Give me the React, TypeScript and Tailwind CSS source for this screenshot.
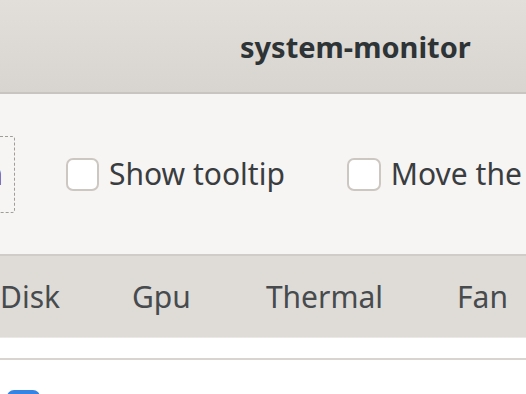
import React from "react";

export default function App() {
  return (
    <div
      className="w-[526px] h-[394px] overflow-hidden flex flex-col bg-white"
      style={{ fontFamily: '"Noto Sans", "DejaVu Sans", sans-serif' }}
    >
      {/* header bar */}
      <div className="h-[94px] shrink-0 flex items-center pl-[240px] bg-gradient-to-b from-[#e2dfdb] to-[#d8d4d0] border-b-2 border-[#c8c4bf]">
        <span className="text-[29px] font-bold text-[#2e3436] leading-none whitespace-nowrap">
          system-monitor
        </span>
      </div>

      {/* options row */}
      <div className="h-[160px] shrink-0 bg-[#f6f5f4] flex items-center whitespace-nowrap">
        <div className="w-[15px] h-[77px] shrink-0 border-y border-r border-dashed border-[#a09c98] rounded-r-[3px] overflow-hidden flex items-center justify-end pr-[11px]">
          <span className="text-[30px] leading-none text-[#7a1f3d]">n</span>
        </div>
        <div className="ml-[51px] flex items-center gap-[10px]">
          <div className="w-[33px] h-[33px] rounded-[7px] border-2 border-[#cdc7c1] bg-white" />
          <span className="text-[30px] leading-none text-[#3a3d3f]">Show tooltip</span>
        </div>
        <div className="ml-[62px] flex items-center gap-[10px]">
          <div className="w-[34px] h-[33px] rounded-[7px] border-2 border-[#cdc7c1] bg-white" />
          <span className="text-[30px] leading-none text-[#3a3d3f]">Move the</span>
        </div>
      </div>

      {/* tab bar */}
      <div className="h-[84px] shrink-0 bg-[#dfdcd8] border-t-2 border-[#d0ccc7] border-b border-b-[#ebe9e6] flex items-center whitespace-nowrap">
        <span className="text-[30px] leading-none text-[#474b4e]">Disk</span>
        <span className="ml-[72px] text-[30px] leading-none text-[#474b4e]">Gpu</span>
        <span className="ml-[75px] text-[30px] leading-none text-[#474b4e]">Thermal</span>
        <span className="ml-[74px] text-[30px] leading-none text-[#474b4e]">Fan</span>
      </div>

      {/* white strip */}
      <div className="h-[22px] shrink-0 bg-white border-b-2 border-[#d8d4cf]" />

      {/* list area */}
      <div className="flex-1 bg-white pl-[7px] pt-[30px]">
        <div className="w-[33px] h-[33px] rounded-[7px] bg-[#3584e4]" />
      </div>
    </div>
  );
}
